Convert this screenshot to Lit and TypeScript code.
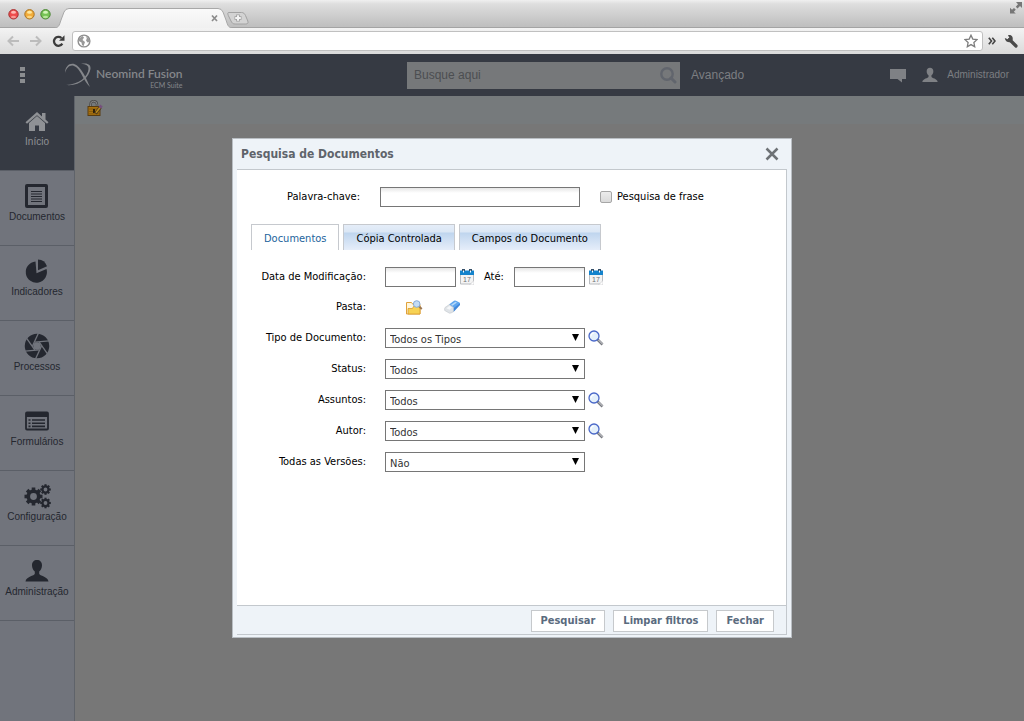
import { LitElement, html, css, svg, nothing } from "lit";
import { customElement, state } from "lit/decorators.js";

const gear = (cx: number, cy: number, r: number, hole: number, teeth: number) => svg`
  <g transform="translate(${cx} ${cy})">
    <circle r=${(r * 0.78 + hole) / 2} fill="none" stroke="currentColor" stroke-width=${r * 0.78 - hole}></circle>
    ${Array.from({ length: teeth }, (_, i) => svg`
      <rect x=${-r * 0.2} y=${-r} width=${r * 0.4} height=${r * 0.36} fill="currentColor"
        transform="rotate(${(360 / teeth) * i})"></rect>`)}
  </g>`;

const personPath =
  "M12 1C8.900 1 7 3 7 6.200c0 3 1.300 5 2.800 6.300v2.300C9.500 17 1 17.500 0.500 22.500h23C23 17.500 14.500 17 14.200 14.800v-2.300C15.700 11.200 17 9.200 17 6.200 17 3 15.100 1 12 1z";

const glyphs: Record<string, unknown> = {
  home: svg`<path fill="currentColor" d="M12 3L0.500 13.200l1.500 1.600L12 6.200l10 8.600 1.500-1.600L20.500 10.500V4h-3.500v3.400z"></path>
    <path fill="currentColor" d="M12 7L4 14V22h6v-5.500h4v5.500h6v-8z"></path>`,
  documents: svg`<rect x="1.500" y="1.500" width="20" height="21" rx="0.500" fill="none" stroke="currentColor" stroke-width="3"></rect>
    <path stroke="currentColor" stroke-width="1.200" d="M6 7.500h11M6 10h11M6 12.500h11M6 15h11M6 17.500h11"></path>`,
  pie: svg`<path fill="currentColor" d="M10.500 2.500A10.600 10.600 0 1 0 21.500 10L11.500 14.200z"></path>
    <path fill="currentColor" d="M13 0.500A10 10 0 0 1 22 7.200L13 11.200z"></path>`,
  aperture: svg`<circle cx="12" cy="12" r="8" fill="none" stroke="currentColor" stroke-width="8.500"></circle>
    ${[0, 60, 120, 180, 240, 300].map((a) => svg`
      <path d="M7.500 12L13.500 -1" stroke="#71747c" stroke-width="1.300" transform="rotate(${a} 12 12)"></path>`)}`,
  form: svg`<rect x="1" y="3.500" width="22" height="17" rx="1" fill="none" stroke="currentColor" stroke-width="1.800"></rect>
    <rect x="1" y="3" width="22" height="5" fill="currentColor"></rect>
    <path stroke="currentColor" stroke-width="1.600" d="M3.500 11h2M7 11h13M3.500 14.200h2M7 14.200h13M3.500 17.400h2M7 17.400h13"></path>`,
  gears: svg`${gear(8.5, 12.5, 9, 3.4, 8)}${gear(20.500, 5.500, 5.300, 1.900, 8)}${gear(20.500, 19, 5.300, 1.900, 8)}`,
  person: svg`<path fill="currentColor" d=${personPath}></path>`,
};

const lens = html`<svg width="16" height="16" viewBox="0 0 16 16" aria-hidden="true">
  <path d="M9.500 9.500L14.500 14.500" stroke="#77797f" stroke-width="2.600"></path>
  <path d="M10.500 10L14.500 14" stroke="#d8dade" stroke-width="1"></path>
  <circle cx="6" cy="6" r="5" fill="#e4f0fb" stroke="#4a68c8" stroke-width="1.300"></circle>
  <path d="M3 6.500A3 3 0 0 1 6 3" fill="none" stroke="#fff" stroke-width="1.200"></path>
</svg>`;

const calendar = html`<svg width="14" height="16" viewBox="0 0 14 16" aria-hidden="true">
  <path d="M0.500 5h13v10h-13z" fill="#f4f4f4" stroke="#b9bcc0"></path>
  <path d="M0 1.500h14v4.500H0z" fill="#1483cc"></path>
  <path d="M2 0h3v2H2zM9 0h3v2H9z" fill="#35506a"></path>
  <path d="M3 1.500h1v2H3zM10 1.500h1v2h-1z" fill="#fff"></path>
  <text x="3" y="13" font-family="Liberation Sans, sans-serif" font-size="7" fill="#6d7075">17</text>
  <path d="M14 11.500V16h-4.500z" fill="#fff" stroke="#c2c4c7" stroke-width="0.600"></path>
</svg>`;

const folder = html`<svg width="17" height="15" viewBox="0 0 17 15" aria-hidden="true">
  <path d="M0.500 2.500h5l1.500 2h7v9.500h-13.500z" fill="#fff6dc" stroke="#e0a23a"></path>
  <path d="M2 14V8.500h4.500l1-2H14V14z" fill="#f7d254" stroke="#d99a2e" stroke-width="0.800"></path>
  <path d="M13.200 6.500L15.800 9" stroke="#9a7652" stroke-width="1.800"></path>
  <circle cx="10.700" cy="4" r="3.300" fill="#c4dcf5" stroke="#86aad6"></circle>
</svg>`;

const eraser = html`<svg width="17" height="14" viewBox="0 0 17 14" aria-hidden="true">
  <path d="M5 4.500L10 0.800Q11 0.300 12 0.800L15.500 2.600Q16.400 3.300 15.800 4.600L9.500 11.500 5.500 9z" fill="#5fa6ee"></path>
  <path d="M9.500 8.200L16 3.200V5L9.300 12.200z" fill="#3f86da"></path>
  <path d="M7 4.800L11.500 1.700 13 2.500 8.500 5.800z" fill="#b4d8fa"></path>
  <path d="M5.300 4.500L1 7.500Q0.300 8.500 0.700 10.500L5.500 13.200Q7 13.300 9.400 11.700L9.500 7.500z" fill="#dfe3e7" stroke="#c2c7cc" stroke-width="0.600"></path>
  <path d="M2.500 8.300L5.300 6 8 7.300 5.500 9.700z" fill="#f5f7f9"></path>
</svg>`;

@customElement("browser-frame")
class BrowserFrame extends LitElement {
  static styles = css`
    :host { display: block; }
    .strip { display: flex; justify-content: space-between; height: 28px; box-sizing: border-box;
      background: linear-gradient(#f0f0f0 0, #dedede 4px, #bfbfbf 26px); border-bottom: 1px solid #a3a3a3; }
    .strip svg { display: block; }
    .bar { display: flex; align-items: center; height: 26px; padding: 0 6px; box-sizing: border-box;
      background: linear-gradient(#f3f3f3, #dadada); }
    .nav { display: flex; align-items: center; gap: 9px; width: 66px; }
    button { display: flex; padding: 0; border: 0; background: none; }
    .address { flex: 1; min-width: 0; display: flex; align-items: center; height: 20px; padding: 0 4px; box-sizing: border-box;
      background: #fff; border: 1px solid #c0c0c0; border-radius: 3px; }
    .address input { flex: 1; min-width: 0; border: 0; padding: 0 6px; outline: 0; background: none; }
    .tools { display: flex; align-items: center; gap: 8px; padding-left: 5px; }
  `;
  render() {
    return html`
      <div class="strip">
        <svg width="260" height="28" viewBox="0 0 260 28" aria-hidden="true">
          <defs>
            <linearGradient id="tab" x2="0" y2="1"><stop stop-color="#fafafa"></stop><stop offset="1" stop-color="#f0f0f0"></stop></linearGradient>
          </defs>
          <path d="M52 28.500C59 28 59 26 61 20L64 12Q65.500 8.500 69 8.500H218Q221.500 8.500 223 12L226 20C228 26 228 28 235 28.500z" fill="url(#tab)" stroke="#a8a8a8"></path>
          <path d="M229 12.500h12.500c2 0 3 1 4 3l2.300 5.500c.8 2-.3 3-2 3H235c-2 0-3-1-4-3l-2.700-5.500c-.8-2-.8-3 .7-3z" fill="#d3d3d3" stroke="#a2a2a2"></path>
          <path d="M238 14.500v7M234.500 18h7" stroke="#a0a0a0" stroke-width="3.600"></path>
          <path d="M238 15.200v5.600M235.200 18h5.600" stroke="#f4f4f4" stroke-width="2"></path>
          <path d="M212 15.500l5 5.500M217 15.500l-5 5.500" stroke="#8c8c8c" stroke-width="1.700"></path>
          ${[["#ee4b4b", "#a43232", "#ffb9b2"], ["#f2ac3a", "#a87323", "#ffe79b"], ["#76c355", "#4b8434", "#d3f5b8"]].map(
            ([fill, edge, shine], i) => svg`
            <circle cx=${13.5 + i * 16} cy="14.300" r="4.700" fill=${fill} stroke=${edge}></circle>
            <ellipse cx=${13.5 + i * 16} cy="12.200" rx="2.500" ry="1.500" fill=${shine}></ellipse>
            <ellipse cx=${13.5 + i * 16} cy="17" rx="2.500" ry="1.200" fill=${shine} opacity="0.700"></ellipse>`)}
        </svg>
        <svg width="16" height="16" viewBox="0 0 16 16" aria-hidden="true">
          <path d="M8 2h6v6l-2-2-2.500 2.500L7.800 6.700 10 4.200zM2 13.500V7.800l2 2L6 8l1.800 1.800L5.800 11.700l2 1.800z" fill="#777"></path>
        </svg>
      </div>
      <div class="bar">
        <div class="nav">
          <button aria-label="Voltar"><svg width="14" height="14" viewBox="0 0 14 14"><path d="M13 7H3M7 2.500L2.500 7 7 11.500" fill="none" stroke="#bcbcbc" stroke-width="2"></path></svg></button>
          <button aria-label="Avançar"><svg width="14" height="14" viewBox="0 0 14 14"><path d="M1 7H11M7 2.500L11.500 7 7 11.500" fill="none" stroke="#bcbcbc" stroke-width="2"></path></svg></button>
          <button aria-label="Recarregar"><svg width="14" height="14" viewBox="0 0 14 14"><path d="M10.300 9.700A4.500 4.500 0 1 1 9.500 4" fill="none" stroke="#3c3c3c" stroke-width="2.300"></path><path d="M12.500 1.200V6.700H7z" fill="#3c3c3c"></path></svg></button>
        </div>
        <div class="address">
          <svg width="14" height="14" viewBox="0 0 14 14" aria-hidden="true">
            <circle cx="7" cy="7" r="5.900" fill="#fff" stroke="#8e8e8e" stroke-width="1.400"></circle>
            <path d="M2 4.500L5.500 2l1.500 1.500L5.500 6 8 8l-1.500 4.300L5 11 4.500 8.500 1.800 7zM9 2l3 2.500.5 3.500-2 .5L9 6.500l.8-2z" fill="#999"></path>
          </svg>
          <input aria-label="Endereço" />
          <svg width="14" height="14" viewBox="0 0 14 14" aria-hidden="true"><path d="M7 1.200l1.800 3.900 4.200.5-3.100 2.900.8 4.200L7 10.600l-3.700 2.100.8-4.200L1 5.600l4.200-.5z" fill="#fff" stroke="#7d7d7d" stroke-width="1.300"></path></svg>
        </div>
        <div class="tools">
          <svg width="8" height="8" viewBox="0 0 8 8" aria-hidden="true"><path d="M0.800 0.800L3.500 4 0.800 7.200M4.300 0.800L7 4 4.300 7.200" fill="none" stroke="#444" stroke-width="1.600"></path></svg>
          <button aria-label="Ferramentas"><svg width="14" height="14" viewBox="0 0 14 14"><path d="M5.500 5.500L12 12" stroke="#4a4a4a" stroke-width="3.200" stroke-linecap="round"></path><path d="M4 1.200c3-.8 5.300 1.300 4.700 4.600L6.500 8.200C3.500 8.600 1 7 0.800 4l3 1.200 1.500-1.400z" fill="#4a4a4a"></path></svg></button>
        </div>
      </div>`;
  }
}

@customElement("top-header")
class TopHeader extends LitElement {
  static styles = css`
    :host { display: grid; grid-template-columns: 407fr 273px 344fr; align-items: center; height: 42px;
      background: #363a43; color: #7c7e82; font: 12px/14px "Liberation Sans", Arial, sans-serif; }
    .left, .right, .user { display: flex; align-items: center; }
    .left { padding-left: 16px; gap: 36px; }
    .brand { display: flex; align-items: center; gap: 4px; color: #85878b; font-family: Lato, sans-serif; }
    .names { display: flex; flex-direction: column; font-weight: 600; line-height: 14px; padding-top: 6px; }
    .suite { align-self: flex-end; font-size: 7px; line-height: 9px; font-weight: 400; }
    button { display: flex; padding: 0; border: 0; background: none; color: inherit; }
    .search { display: flex; align-items: center; height: 27px; padding: 0 3px 0 7px; background: #76787a; }
    input { flex: 1; min-width: 0; border: 0; padding: 0; outline: 0; background: none; font: inherit; color: #4a4c50; }
    input::placeholder { color: #4c4e51; opacity: 1; }
    .right { justify-content: space-between; padding: 0 15px 0 11px; }
    a { color: inherit; text-decoration: none; }
    .user { gap: 15px; }
    .account { display: flex; align-items: center; gap: 9px; font-size: 10px; }
  `;
  render() {
    return html`
      <div class="left">
        <button aria-label="Menu"><svg width="12" height="18" viewBox="0 0 12 18"><path d="M4 1h5v4H4zM4 7h5v4H4zM4 13h5v4H4z" fill="#8b8d90"></path></svg></button>
        <div class="brand">
          <svg width="28" height="26" viewBox="0 0 28 26" aria-hidden="true">
            <path d="M1 11C1 2.500 8 -0.500 13 3.500 19 8.500 22 16 26 25 19.500 19 18 10 12 5 7.500 1.500 3 4 1 11z" fill="#85878b"></path>
            <path d="M17 2C24 0.500 27 3 26.500 7 25 15 16 24.500 2 23 15 22.500 24 14.500 24.500 7 24.700 3.500 22 2 17 2z" fill="#85878b"></path>
          </svg>
          <div class="names"><span>Neomind Fusion</span><span class="suite">ECM Suite</span></div>
        </div>
      </div>
      <label class="search">
        <input placeholder="Busque aqui" aria-label="Busque aqui" />
        <svg width="18" height="18" viewBox="0 0 18 18" aria-hidden="true"><circle cx="8" cy="8" r="5.700" fill="none" stroke="#61656d" stroke-width="2.400"></circle><path d="M12 12l4 4" stroke="#61656d" stroke-width="3" stroke-linecap="round"></path></svg>
      </label>
      <div class="right">
        <a href="#">Avançado</a>
        <div class="user">
          <button aria-label="Mensagens"><svg width="18" height="15" viewBox="0 0 18 15"><path d="M1 1h16v10h-4v3.500L8.500 11H1z" fill="#7f8185"></path></svg></button>
          <a class="account" href="#">
            <svg width="16" height="16" viewBox="0 0 24 24" aria-hidden="true"><path fill="#7f8185" d=${personPath}></path></svg>
            Administrador
          </a>
        </div>
      </div>`;
  }
}

@customElement("side-menu")
class SideMenu extends LitElement {
  static styles = css`
    :host { display: block; width: 74px; background: #71747c; border-right: 1px solid #5f636a; }
    a { display: flex; flex-direction: column; align-items: center; height: 75px; padding-top: 13px; box-sizing: border-box;
      border-bottom: 1px solid #5b5f67; color: #24272f; text-decoration: none; white-space: nowrap;
      font: 10px/12px "Liberation Sans", Arial, sans-serif; }
    a.active { background: #363a43; color: #8f9195; }
    svg { overflow: visible; margin-bottom: 3px; }
  `;
  items = [
    ["home", "Início"], ["documents", "Documentos"], ["pie", "Indicadores"], ["aperture", "Processos"],
    ["form", "Formulários"], ["gears", "Configuração"], ["person", "Administração"],
  ];
  render() {
    return html`<nav>${this.items.map(([icon, label], i) => html`
      <a href="#" class=${i === 0 ? "active" : ""}>
        <svg width="24" height="24" viewBox="0 0 24 24" aria-hidden="true">${glyphs[icon]}</svg>${label}
      </a>`)}</nav>`;
  }
}

@customElement("search-dialog")
class SearchDialog extends LitElement {
  @state() tab = 0;
  tabs = ["Documentos", "Cópia Controlada", "Campos do Documento"];
  filters: [string, string, string, boolean][] = [
    ["tipo", "Tipo de Documento:", "Todos os Tipos", true],
    ["status", "Status:", "Todos", false],
    ["assuntos", "Assuntos:", "Todos", true],
    ["autor", "Autor:", "Todos", true],
    ["versoes", "Todas as Versões:", "Não", false],
  ];
  static styles = css`
    :host { display: block; width: 560px; max-width: 100%; box-sizing: border-box; background: #eef3f8;
      border: 1px solid #b9bec3; padding: 0 4px 2px 4px; color: #000; font: 11px/16px "DejaVu Sans Condensed", Tahoma, sans-serif; }
    header { display: flex; justify-content: space-between; align-items: center; height: 30px; padding: 0 8px 0 4px; }
    h1 { margin: 0; color: #5f646b; font: bold 12px/16px "DejaVu Sans Condensed", Tahoma, sans-serif; }
    button { padding: 0; border: 0; background: none; font: inherit; }
    .icon { display: flex; }
    .frame { border: 1px solid #c3c8cd; border-left: 0; }
    .body { min-height: 435px; padding: 17px 14px; box-sizing: border-box; background: #fff; }
    .row { display: flex; align-items: center; height: 20px; }
    .name { width: 115px; margin-right: 19px; text-align: right; }
    .keyword .name { width: 109px; margin-right: 20px; }
    input[type="text"] { width: 200px; height: 20px; box-sizing: border-box; border: 1px solid #767676; padding: 1px 4px;
      font: inherit; background: linear-gradient(#e6e6e6, #fff 5px); }
    .row input.date { width: 71px; }
    input[type="checkbox"] { appearance: none; width: 12px; height: 12px; margin: 0 5px 0 20px; border: 1px solid #a6a6a6;
      border-radius: 2px; background: linear-gradient(#ececec, #dadada); }
    .tabs { display: flex; gap: 4px; margin: 17px 0; }
    .tabs button { height: 26px; padding: 3px 12px 0 12px; border: 1px solid #c6c9ce; border-bottom: 0; color: #000;
      background: linear-gradient(#e5edf8 0, #dbe7f5 7px, #bfd5ee 8px, #e6eefa 100%); }
    .tabs button[aria-selected="true"] { background: #fff; color: #1d639c; }
    .fields { display: flex; flex-direction: column; gap: 11px; }
    .dates .icon { margin: 0 10px 0 4px; }
    .until { margin-right: 10px; }
    .folder { height: 19px; }
    .folder .icon { margin-left: 21px; }
    .choice { display: grid; width: 200px; margin-right: 3px; }
    select, .choice svg { grid-area: 1 / 1; }
    select { appearance: none; height: 20px; box-sizing: border-box; border: 1px solid #767676; border-radius: 0; padding: 3px 4px 0 4px;
      background: #fff; color: #333; font: inherit; }
    .choice svg { place-self: center end; margin-right: 6px; pointer-events: none; }
    footer { display: flex; justify-content: flex-end; align-items: center; gap: 8px; height: 29px; padding: 2px 12px 0 0;
      border-top: 1px solid #c3c8cd; box-sizing: border-box; }
    footer button { height: 22px; padding: 1px 9px 0 9px; border: 1px solid #c6c9cc; background: #fff; color: #5a6b7e;
      font: bold 11px/14px "DejaVu Sans Condensed", Tahoma, sans-serif; }
  `;
  render() {
    return html`
      <header>
        <h1>Pesquisa de Documentos</h1>
        <button class="icon" aria-label="Fechar janela"><svg width="14" height="14" viewBox="0 0 14 14"><path d="M1.500 1.500l11 11M12.500 1.500l-11 11" stroke="#6e7276" stroke-width="2.500"></path></svg></button>
      </header>
      <div class="frame">
        <div class="body">
          <div class="row keyword">
            <label class="name" for="palavra">Palavra-chave:</label><input type="text" id="palavra" />
            <input type="checkbox" id="frase" /><label for="frase">Pesquisa de frase</label>
          </div>
          <div class="tabs" role="tablist">
            ${this.tabs.map((t, i) => html`<button role="tab" aria-selected=${i === this.tab} @click=${() => (this.tab = i)}>${t}</button>`)}
          </div>
          <div class="fields">
            <div class="row dates">
              <label class="name" for="de">Data de Modificação:</label><input type="text" class="date" id="de" />
              <button class="icon" aria-label="Calendário inicial">${calendar}</button>
              <label class="until" for="ate">Até:</label><input type="text" class="date" id="ate" />
              <button class="icon" aria-label="Calendário final">${calendar}</button>
            </div>
            <div class="row folder">
              <span class="name">Pasta:</span>
              <button class="icon" aria-label="Escolher pasta">${folder}</button>
              <button class="icon" aria-label="Limpar pasta">${eraser}</button>
            </div>
            ${this.filters.map(([id, label, value, find]) => html`
              <div class="row">
                <label class="name" for=${id}>${label}</label>
                <span class="choice">
                  <select id=${id}><option>${value}</option></select>
                  <svg width="7" height="7" viewBox="0 0 7 7" aria-hidden="true"><path d="M0 0h7L3.500 7z" fill="#000"></path></svg>
                </span>
                ${find ? html`<button class="icon" aria-label="Procurar">${lens}</button>` : nothing}
              </div>`)}
          </div>
        </div>
        <footer><button>Pesquisar</button><button>Limpar filtros</button><button>Fechar</button></footer>
      </div>`;
  }
}

@customElement("app-root")
class AppRoot extends LitElement {
  static styles = css`
    :host { display: flex; flex-direction: column; min-height: 100vh; }
    .page { position: relative; flex: 1; display: flex; flex-direction: column; background: #777; }
    .main { flex: 1; display: flex; }
    .content { flex: 1; }
    .crumbs { display: flex; align-items: center; height: 28px; padding: 0 0 4px 12px; box-sizing: border-box; background: #767a7c; }
    .overlay { position: absolute; inset: 0; display: grid; place-items: center; }
  `;
  render() {
    return html`
      <browser-frame></browser-frame>
      <div class="page">
        <top-header></top-header>
        <div class="main">
          <side-menu></side-menu>
          <div class="content">
            <div class="crumbs">
              <svg width="16" height="16" viewBox="0 0 16 16" aria-hidden="true">
                <path d="M3.500 7V4.500Q3.500 1.200 6.700 1.200T10 4.500V7" fill="none" stroke="#4b4b4b" stroke-width="2.400"></path>
                <path d="M3.500 7V4.500Q3.500 1.200 6.700 1.200T10 4.500V7" fill="none" stroke="#8d8d8d" stroke-width="0.900"></path>
                <rect x="1" y="6.500" width="12" height="9" fill="#a8710e" stroke="#583c12"></rect>
                <path d="M2 9h10M2 11.500h10M2 13.800h10" stroke="#7f550d" stroke-width="0.800"></path>
                <path d="M6 9h2v4H6z" fill="#2e210c"></path>
                <path d="M8.500 13.500L13.500 7" stroke="#4d3a1d" stroke-width="3.200"></path>
                <path d="M9 12.800L13 7.600" stroke="#b98a1e" stroke-width="1.600"></path>
                <path d="M12.800 7.800L14.500 5.500" stroke="#76507d" stroke-width="3"></path>
              </svg>
            </div>
          </div>
        </div>
        <div class="overlay"><search-dialog role="dialog" aria-label="Pesquisa de Documentos"></search-dialog></div>
      </div>`;
  }
}
